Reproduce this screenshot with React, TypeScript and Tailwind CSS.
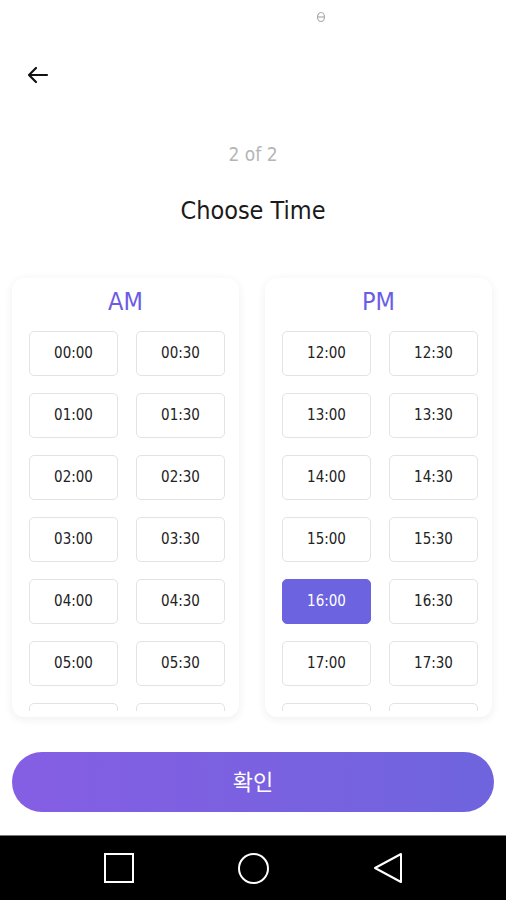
import React, { useState } from 'react';

const amTimes = ['00:00', '00:30', '01:00', '01:30', '02:00', '02:30', '03:00', '03:30', '04:00', '04:30', '05:00', '05:30'];
const pmTimes = ['12:00', '12:30', '13:00', '13:30', '14:00', '14:30', '15:00', '15:30', '16:00', '16:30', '17:00', '17:30'];

const font = { fontFamily: '"Liberation Sans Narrow", "DejaVu Sans Condensed", "Noto Sans CJK KR", sans-serif' };

const TimeCard: React.FC<{ label: string; times: string[]; selected: string; onSelect: (t: string) => void }> = ({ label, times, selected, onSelect }) => (
    <div className="w-[227px] h-[439px] bg-white rounded-[12px] shadow-[0_2px_10px_rgba(0,0,0,0.07)] flex flex-col pb-[6px]">
        <div className="h-[38px] flex items-end justify-center text-[25px] leading-none text-[#6b5ce7] pb-[2px]">{label}</div>
        <div className="flex-1 overflow-hidden pt-[15px] pl-[17px]">
            <div className="grid grid-cols-[89px_89px] gap-x-[18px] gap-y-[17px]">
                {times.map(t => (
                    <button
                        key={t}
                        onClick={() => onSelect(t)}
                        className={
                            t === selected
                                ? 'h-[45px] rounded-[5px] bg-[#6c63e0] border border-[#6c63e0] text-white text-[15px]'
                                : 'h-[45px] rounded-[5px] bg-white border border-[#e3e3e3] text-[#222] text-[15px]'
                        }
                        style={font}
                    >
                        {t}
                    </button>
                ))}
                {/* next row, scrolled out of view */}
                <div className="h-[45px] rounded-[5px] border border-[#e3e3e3]" />
                <div className="h-[45px] rounded-[5px] border border-[#e3e3e3]" />
            </div>
        </div>
    </div>
);

export default function App() {
    const [selected, setSelected] = useState('16:00');

    return (
        <div className="w-[506px] h-[900px] bg-white flex flex-col" style={font}>
            <div className="h-[35px] flex justify-center pl-[136px] pt-[11px]">
                <svg width="10" height="12" viewBox="0 0 10 12">
                    <ellipse cx="5" cy="6" rx="3.5" ry="4.5" fill="none" stroke="#aaa" strokeWidth="1.2" />
                    <line x1="1.5" y1="6" x2="8.5" y2="6" stroke="#aaa" strokeWidth="1.2" />
                </svg>
            </div>
            <div className="h-[80px] flex items-center pl-[27px]">
                <svg width="22" height="18" viewBox="0 0 22 18" fill="none" stroke="#111" strokeWidth="2.2" strokeLinecap="round" strokeLinejoin="round">
                    <path d="M20 9H2M9 2L2 9l7 7" />
                </svg>
            </div>
            <div className="text-center text-[19px] leading-none text-[#b5b5b5] mt-[30px]">2 of 2</div>
            <div className="text-center text-[25px] leading-none text-[#1a1a1a] mt-[34px]">Choose Time</div>
            <div className="flex justify-between pl-[12px] pr-[14px] mt-[55px]">
                <TimeCard label="AM" times={amTimes} selected={selected} onSelect={setSelected} />
                <TimeCard label="PM" times={pmTimes} selected={selected} onSelect={setSelected} />
            </div>
            <div className="px-[12px] mt-[35px]">
                <button className="w-full h-[60px] rounded-full bg-gradient-to-r from-[#855ee3] to-[#6f64de] text-white text-[22px]" style={font}>
                    확인
                </button>
            </div>
            <div className="mt-auto h-[65px] bg-black border-t border-[#777] flex items-center justify-center gap-[104px]">
                <div className="w-[30px] h-[30px] border-2 border-white" />
                <div className="w-[31px] h-[31px] rounded-full border-2 border-white" />
                <svg width="30" height="32" viewBox="0 0 30 32" fill="none" stroke="white" strokeWidth="2" strokeLinejoin="round">
                    <path d="M28 2L2 16l26 14z" />
                </svg>
            </div>
        </div>
    );
}
